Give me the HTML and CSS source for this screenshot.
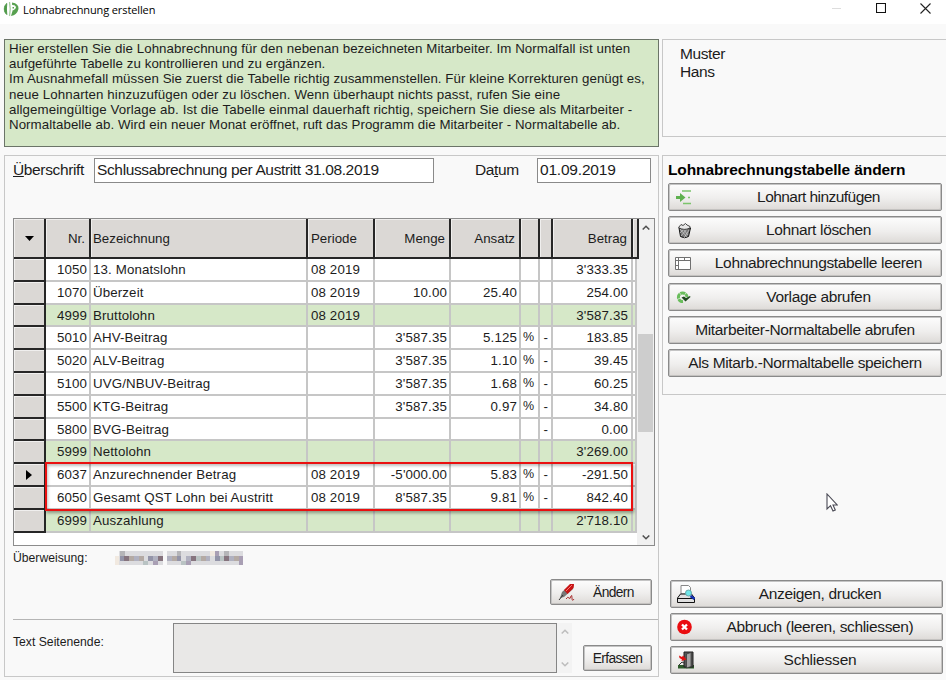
FILE: index.html
```html
<!DOCTYPE html>
<html lang="de">
<head>
    <meta charset="UTF-8">
    <meta name="viewport" content="width=device-width, initial-scale=1.0">
    <title>Lohnabrechnung erstellen</title>
    <link rel="stylesheet" href="styles.css">
</head>
<body>
    <header class="titlebar">
        <svg class="app-icon" width="16" height="16" viewBox="0 0 16 16">
            <path d="M3.800 2.500C.5 5 .5 11 3.800 13.500Q3 8 3.800 2.500z" fill="#4f9a4a" stroke="#4f9a4a"/>
            <path d="M6.500 1Q8 8 6.500 15" fill="none" stroke="#a5cda0" stroke-width="1.300"/>
            <path d="M9 1.500Q16 2.500 15.500 8Q14 14 8 15L9.500 10Z" fill="#57a04f"/>
            <path d="M9 4.500Q12.800 4 12.300 7Q11.500 9 9 9" fill="#fff" stroke="#fff"/>
            <path d="M9.500 6h1.500v1.500H9.500z" fill="#57a04f"/>
        </svg>
        <span class="title">Lohnabrechnung erstellen</span>
        <div class="window-buttons">
            <svg width="10" height="10" viewBox="0 0 10 10"><path d="M0 5.500H9" stroke="#ddd"/></svg>
            <svg width="10" height="10" viewBox="0 0 10 10"><path d="M.5.5h9v9h-9z" fill="none" stroke="#111" stroke-width="1.100"/></svg>
            <svg width="11" height="11" viewBox="0 0 11 11"><path d="M.5.5l10 10M10.500.5l-10 10" stroke="#222" stroke-width="1.100"/></svg>
        </div>
    </header>

    <main class="content">
        <div class="left">
            <div class="info">
                <p><span>Hier erstellen Sie die Lohnabrechnung für den nebenan bezeichneten Mitarbeiter. Im Normalfall ist unten</span><br>
                <span>aufgeführte Tabelle zu kontrollieren und zu ergänzen.</span><br>
                <span>Im Ausnahmefall müssen Sie zuerst die Tabelle richtig zusammenstellen. Für kleine Korrekturen genügt es,</span><br>
                <span class="loose">neue Lohnarten hinzuzufügen oder zu löschen. Wenn überhaupt nichts passt, rufen Sie eine</span><br>
                <span class="loose">allgemeingültige Vorlage ab. Ist die Tabelle einmal dauerhaft richtig, speichern Sie diese als Mitarbeiter -</span><br>
                <span>Normaltabelle ab. Wird ein neuer Monat eröffnet, ruft das Programm die Mitarbeiter - Normaltabelle ab.</span></p>
            </div>

            <div class="panel main-panel">
                <div class="fields">
                    <label class="field-label"><u>Ü</u>berschrift</label>
                    <div class="input heading-input">Schlussabrechnung per Austritt 31.08.2019</div>
                    <label class="field-label date-label">Da<u>t</u>um</label>
                    <div class="input date-input">01.09.2019</div>
                </div>

                <div class="grid">
                    <div class="rows">
                        <div class="row head"><b><svg width="9" height="5"><path d="M0 0h9L4.500 5z"/></svg></b><span>Nr.</span><span>Bezeichnung</span><span>Periode</span><span>Menge</span><span>Ansatz</span><span></span><span></span><span>Betrag</span><span></span></div>
                        <div class="row"><b></b><span>1050</span><span>13. Monatslohn</span><span>08 2019</span><span></span><span></span><span></span><span></span><span>3'333.35</span><span></span></div>
                        <div class="row"><b></b><span>1070</span><span>Überzeit</span><span>08 2019</span><span>10.00</span><span>25.40</span><span></span><span></span><span>254.00</span><span></span></div>
                        <div class="row total"><b></b><span>4999</span><span>Bruttolohn</span><span>08 2019</span><span></span><span></span><span></span><span></span><span>3'587.35</span><span></span></div>
                        <div class="row"><b></b><span>5010</span><span>AHV-Beitrag</span><span></span><span>3'587.35</span><span>5.125</span><span>%</span><span>-</span><span>183.85</span><span></span></div>
                        <div class="row"><b></b><span>5020</span><span>ALV-Beitrag</span><span></span><span>3'587.35</span><span>1.10</span><span>%</span><span>-</span><span>39.45</span><span></span></div>
                        <div class="row"><b></b><span>5100</span><span>UVG/NBUV-Beitrag</span><span></span><span>3'587.35</span><span>1.68</span><span>%</span><span>-</span><span>60.25</span><span></span></div>
                        <div class="row"><b></b><span>5500</span><span>KTG-Beitrag</span><span></span><span>3'587.35</span><span>0.97</span><span>%</span><span>-</span><span>34.80</span><span></span></div>
                        <div class="row"><b></b><span>5800</span><span>BVG-Beitrag</span><span></span><span></span><span></span><span></span><span>-</span><span>0.00</span><span></span></div>
                        <div class="row total"><b></b><span>5999</span><span>Nettolohn</span><span></span><span></span><span></span><span></span><span></span><span>3'269.00</span><span></span></div>
                        <div class="row"><b><svg width="6" height="10"><path d="M0 0v10L6 5z"/></svg></b><span>6037</span><span>Anzurechnender Betrag</span><span>08 2019</span><span>-5'000.00</span><span>5.83</span><span>%</span><span>-</span><span>-291.50</span><span></span></div>
                        <div class="row"><b></b><span>6050</span><span>Gesamt QST Lohn bei Austritt</span><span>08 2019</span><span>8'587.35</span><span>9.81</span><span>%</span><span>-</span><span>842.40</span><span></span></div>
                        <div class="row total"><b></b><span>6999</span><span>Auszahlung</span><span></span><span></span><span></span><span></span><span></span><span>2'718.10</span><span></span></div>
                        <div class="marker"></div>
                    </div>
                    <div class="scrollbar">
                        <svg width="8" height="5" viewBox="0 0 8 5"><path d="M.7 4.500L4 1.200l3.300 3.300" fill="none" stroke="#505050" stroke-width="1.500"/></svg>
                        <div class="thumb"></div>
                        <svg width="8" height="5" viewBox="0 0 8 5"><path d="M.7.5L4 3.800 7.300.5" fill="none" stroke="#505050" stroke-width="1.500"/></svg>
                    </div>
                </div>

                <div class="transfer">
                    <span class="small">Überweisung:</span>
                    <svg class="masked" width="129" height="14" viewBox="0 0 129 14" shape-rendering="crispEdges">
                        <path d="M4 0h44v14h-44zM52 0h76v14h-76z" fill="#dcdcdf"/>
                        <path d="M0 5h4v9h-4zM95 0h5v5h-5z" fill="#f1e9e0"/>
                        <path d="M5 0h5v5h-5zM62 0h4v5h-4zM109 0h5v5h-5z" fill="#b5b5b8"/>
                        <path d="M5 5h4v5h-4zM33 5h5v5h-5zM62 5h4v5h-4zM100 5h5v5h-5z" fill="#9394a8"/>
                        <path d="M9 5h5v5h-5zM43 5h5v5h-5zM76 5h5v5h-5zM109 5h5v5h-5z" fill="#86747e"/>
                        <path d="M14 5h5v5h-5zM24 5h5v5h-5zM57 5h5v5h-5zM86 5h5v5h-5zM119 5h5v5h-5z" fill="#b4aaa4"/>
                        <path d="M19 5h5v5h-5zM38 5h5v5h-5zM52 5h5v5h-5zM71 5h5v5h-5zM91 5h4v5h-4zM114 5h5v5h-5z" fill="#b0b1c0"/>
                        <path d="M28 10h5v4h-5zM66 10h5v4h-5zM81 5h5v5h-5zM105 5h4v5h-4z" fill="#b9c3c3"/>
                        <path d="M38 10h5v4h-5zM71 10h5v4h-5zM100 0h4v5h-4zM124 5h4v9h-4z" fill="#a99fb4"/>
                    </svg>
                </div>

                <div class="change-row">
                    <button class="btn change-btn">
                        <svg width="18" height="18" viewBox="0 0 18 18">
                            <path d="M2 15l2-6 9-8 3 0-1 5-9 8z" fill="#777"/>
                            <path d="M6 7l6-6h4l-.5 4-6 6z" fill="#c81414"/>
                            <path d="M8 8l6-6" stroke="#ff7272"/>
                            <path d="M1 17l4-5" stroke="#333"/>
                            <path d="M8 16q2-3 3-1t2-2q1-2 1 2t2 1" fill="none" stroke="#a33"/>
                        </svg>
                        <span>Ändern</span>
                    </button>
                </div>

                <div class="footer-row">
                    <span class="small">Text Seitenende:</span>
                    <div class="textarea"></div>
                    <div class="text-scroll">
                        <svg width="8" height="5" viewBox="0 0 8 5"><path d="M.7 4.500L4 1.200l3.300 3.300" fill="none" stroke="#bdbdbd" stroke-width="1.500"/></svg>
                        <svg width="8" height="5" viewBox="0 0 8 5"><path d="M.7.5L4 3.800 7.300.5" fill="none" stroke="#bdbdbd" stroke-width="1.500"/></svg>
                    </div>
                    <button class="btn capture-btn"><span>Erfassen</span></button>
                </div>
            </div>
        </div>

        <aside class="right">
            <div class="panel person"><span>Muster</span><br><span>Hans</span></div>

            <div class="panel actions">
                <h2>Lohnabrechnungstabelle ändern</h2>
                <button class="btn wide">
                    <svg width="18" height="18" viewBox="0 0 18 18">
                        <path d="M1 8h4V5l5.500 4.500L5 14v-3H1z" fill="#5fb14f"/>
                        <path d="M7 3h9M8 15.500h8M13 9.500h2" stroke="#7cc46c" stroke-width="1.500"/>
                    </svg>
                    <span class="tight">Lohnart hinzufügen</span>
                </button>
                <button class="btn wide">
                    <svg width="18" height="18" viewBox="0 0 18 18">
                        <path d="M4 7l1.500 8.500q4 2.500 8 0L15.500 7z" fill="#777" stroke="#111"/>
                        <path d="M5 8l7 8M8 8l5 6M12 8l-6 7M9 8l-4 4M14 9l-5 8" stroke="#ddd" stroke-width=".6"/>
                        <path d="M3.500 6.500l2.500-3 2 1 2.500-2 1.500 1.500 3 1.500v1.500q-6 3-11.500-.5z" fill="#e8e8e8" stroke="#333" stroke-width=".9"/>
                    </svg>
                    <span>Lohnart löschen</span>
                </button>
                <button class="btn wide">
                    <svg width="18" height="18" viewBox="0 0 18 18">
                        <path d="M.5 3.500h15v12h-15z" fill="#fff" stroke="#707070"/>
                        <path d="M0 6.500h16M3.500 3v13M9.500 3v3.500M0 11.500h3.500" stroke="#707070"/>
                    </svg>
                    <span>Lohnabrechnungstabelle leeren</span>
                </button>
                <button class="btn wide">
                    <svg width="18" height="18" viewBox="0 0 18 18">
                        <path d="M8 13.500A4.300 4.300 0 1 1 12 9" fill="none" stroke="#69bd5b" stroke-width="3" stroke-dasharray="5 .5"/>
                        <path d="M6.500 9.500l2.500-1 2 1.500L15 8l.5 1-5 4.500z" fill="#1e4a1e"/>
                    </svg>
                    <span>Vorlage abrufen</span>
                </button>
                <button class="btn wide plain"><span>Mitarbeiter-Normaltabelle abrufen</span></button>
                <button class="btn wide plain"><span>Als Mitarb.-Normaltabelle speichern</span></button>
            </div>

            <div class="bottom-actions">
                <button class="btn wide">
                    <svg width="18" height="18" viewBox="0 0 18 18">
                        <path d="M4 9V.5h7.500l2 2V9z" fill="#fff" stroke="#888"/>
                        <path d="M.5 13l3-4h11l3 4v4.500h-17z" fill="#e0e0e0" stroke="#111"/>
                        <path d="M1 13.500h16" stroke="#111"/>
                        <circle cx="11.500" cy="8" r="3" fill="#6fe8ea" stroke="#6aa"/>
                        <path d="M13.500 11l4 3" stroke="#1230b0" stroke-width="2.500"/>
                    </svg>
                    <span>Anzeigen, drucken</span>
                </button>
                <button class="btn wide">
                    <svg width="18" height="18" viewBox="0 0 18 18">
                        <circle cx="7.500" cy="9" r="7.300" fill="#ea0d10"/>
                        <path d="M5 6.500l5 5M10 6.500l-5 5" stroke="#fff" stroke-width="2.300"/>
                    </svg>
                    <span>Abbruch (leeren, schliessen)</span>
                </button>
                <button class="btn wide">
                    <svg width="18" height="18" viewBox="0 0 18 18">
                        <path d="M1 14h16v3.500H1z" fill="#2d5a2a"/>
                        <path d="M7 1h9v15H7z" fill="#555" stroke="#222"/>
                        <path d="M9.500 3l4.500-1.500v14l-4.500 1.500z" fill="#a5a5a5" stroke="#333" stroke-width=".7"/>
                        <path d="M2 14l3-3 2 1" fill="none" stroke="#333"/>
                        <path d="M2 4.500l3 1.500 1-1.500 3.500 4-5 1.500 .5-1.500-2.500-1.500z" fill="#e01010"/>
                    </svg>
                    <span class="open">Schliessen</span>
                </button>
            </div>
        </aside>
    </main>

    <svg class="cursor" width="12" height="19" viewBox="0 0 12 19"><path d="M1 1v15l3.500-3.300 2.500 5.300 2.300-1-2.300-5h4.200z" fill="#fff" stroke="#4a4a55" stroke-width="1.100"/></svg>
</body>
</html>
```
FILE: styles.css
```css
* {
    box-sizing: border-box;
}
body {
    margin: 0;
    width: 946px;
    height: 680px;
    overflow: hidden;
    position: relative;
    background: #f9f9f9;
    color: #1c1c1c;
    font-family: "Liberation Sans", Arial, sans-serif;
    font-size: 13px;
}
svg {
    display: block;
    flex: none;
}
.titlebar {
    display: flex;
    height: 24px;
    padding: 1px 15px 0 3px;
    background: #fff;
}
.title {
    margin-left: 4px;
    color: #000;
    font-family: "Open Sans", "Noto Sans", sans-serif;
    font-size: 11px;
    letter-spacing: -0.11px;
    line-height: 17px;
}
.window-buttons {
    display: flex;
    gap: 34px;
    margin: 2px 0 0 auto;
}
.content {
    display: flex;
    gap: 3px;
    padding: 15px 0 0 4px;
}
.left {
    width: 655px;
}
.info {
    height: 108px;
    padding: 1px 4px;
    border: 1px solid #6b7468;
    background: #d6e8c8;
    font-size: 13.3px;
    letter-spacing: 0.06px;
    line-height: 15.2px;
    white-space: nowrap;
}
.info p {
    margin: 0;
}
.info .loose {
    letter-spacing: 0.1px;
}
.panel {
    border: 1px solid #c8c8c8;
}
.main-panel {
    height: 522px;
    margin-top: 8px;
    padding-left: 8px;
}
.fields {
    display: flex;
    height: 25px;
    margin-top: 2px;
    font-size: 15.5px;
    letter-spacing: -0.36px;
    line-height: 23px;
}
.field-label {
    width: 81px;
    white-space: nowrap;
}
.date-label {
    width: 62px;
    margin-left: 41px;
}
.input {
    height: 25px;
    padding-left: 2px;
    border: 1px solid #8a8a8a;
    background: #fff;
    line-height: 22px;
    white-space: nowrap;
}
.heading-input {
    width: 340px;
}
.date-input {
    width: 114px;
    letter-spacing: -0.2px;
}

/* Tabelle */
.grid {
    display: flex;
    width: 642px;
    height: 328px;
    margin-top: 35px;
    border: 1px solid #8c8c8c;
    background: #fff;
}
.rows {
    width: 623px;
    position: relative;
}
.row {
    display: grid;
    grid-template-columns: 32px 45px 217px 67px 76px 70px 19px 13px 80px 4px;
    height: 22.8px;
    font-size: 13.3px;
    letter-spacing: 0.13px;
    line-height: 21px;
    white-space: nowrap;
}
.row > * {
    border-right: 2px solid #c6c6c6;
    border-bottom: 2px solid #c6c6c6;
    overflow: hidden;
    padding: 0 2px;
}
.row > b {
    display: flex;
    align-items: center;
    justify-content: center;
    border-color: #262626;
    background: #dbd8d5;
    box-shadow: inset 1px 1px #f0efee;
}
.row > :nth-child(2),
.row > :nth-child(4) ~ * {
    text-align: right;
}
.row > :nth-child(4) {
    padding-left: 3px;
}
.row > :nth-child(7) {
    padding-right: 4px;
    font-size: 12.5px;
}
.row > :nth-child(8),
.row > :nth-child(9) {
    padding-right: 3px;
}
.row > :last-child {
    padding: 0;
}
.total > span {
    background: #d6e8c8;
}
.head {
    height: 40px;
    letter-spacing: 0;
    line-height: 39px;
}
.head > * {
    border-color: #262626;
    background: #dbd8d5;
    box-shadow: inset 1px 1px #f0efee;
}
.head > :nth-child(2),
.head > :nth-child(4) ~ * {
    padding-right: 4px;
}
.marker {
    position: absolute;
    left: 31px;
    top: 243px;
    width: 588px;
    height: 49px;
    border: 2px solid #ea1010;
    box-shadow: 1px 2px 3px rgba(0, 0, 0, 0.35), inset 1px 2px 3px rgba(0, 0, 0, 0.25);
}
.scrollbar {
    display: flex;
    flex-direction: column;
    align-items: center;
    justify-content: space-between;
    width: 17px;
    padding: 6px 0 5px;
    background: #f1f1f1;
}
.thumb {
    width: 15px;
    height: 98px;
    background: #cdcdcd;
}
.small {
    font-size: 12.200px;
    white-space: nowrap;
}
.transfer {
    display: flex;
    align-items: center;
    height: 24px;
}
.masked {
    margin-left: 28px;
}
.transfer .small {
    width: 74px;
}

/* Schaltflächen */
.btn {
    display: flex;
    align-items: center;
    padding: 0;
    border: 1px solid #8a8a8a;
    border-radius: 2px;
    background: linear-gradient(#fdfdfd, #efeeed 55%, #dddad7);
    box-shadow: inset 1px 1px #c4c4c4, inset -1px -1px #c4c2c0;
    color: #1c1c1c;
    font-family: inherit;
    white-space: nowrap;
}
.btn span {
    flex: 1;
    text-align: center;
}
.change-row {
    display: flex;
    justify-content: flex-end;
    height: 50px;
    padding: 9px 6px 0 0;
    border-bottom: 1px solid #b5b5b5;
}
.change-btn,
.capture-btn {
    height: 26px;
    font-size: 13.8px;
    letter-spacing: -0.6px;
}
.change-btn {
    width: 102px;
    padding: 0 0 0 7px;
}
.footer-row {
    display: flex;
    align-items: flex-start;
    padding-top: 3px;
}
.footer-row .small {
    width: 160px;
    padding-top: 12px;
}
.textarea {
    width: 384px;
    height: 50px;
    border: 1px solid #858585;
    background: #e9e8e7;
}
.text-scroll {
    display: flex;
    flex-direction: column;
    align-items: center;
    justify-content: space-between;
    width: 15px;
    height: 50px;
    padding: 6px 0;
    background: #f3f3f3;
}
.capture-btn {
    width: 69px;
    margin: 22px 0 0 11px;
}

.right {
    flex: 1;
}
.right .panel {
    border-right: 0;
}
.person {
    height: 98px;
    padding: 5px 17px;
    font-size: 15.5px;
    letter-spacing: -0.4px;
    line-height: 18px;
}
.actions {
    height: 240px;
    margin-top: 18px;
    padding: 5px 4px 0 5px;
}
.actions h2 {
    margin: 0 0 4px;
    color: #000;
    font-size: 15.5px;
    letter-spacing: -0.1px;
    line-height: 18px;
    white-space: nowrap;
}
.wide {
    width: 274px;
    height: 28px;
    margin-bottom: 5.200px;
    padding: 0 0 0 8px;
    font-size: 15.5px;
    letter-spacing: -0.34px;
}
.wide svg {
    margin-left: -2px;
}
.wide svg + span {
    padding-left: 3px;
}
.wide .tight {
    letter-spacing: -0.55px;
}
.wide .open {
    letter-spacing: -0.2px;
}
.wide.plain {
    padding: 0;
}
.bottom-actions {
    padding: 185px 0 0 8px;
}
.bottom-actions .wide {
    width: 273px;
}
.cursor {
    position: absolute;
    left: 826px;
    top: 493px;
}
```
